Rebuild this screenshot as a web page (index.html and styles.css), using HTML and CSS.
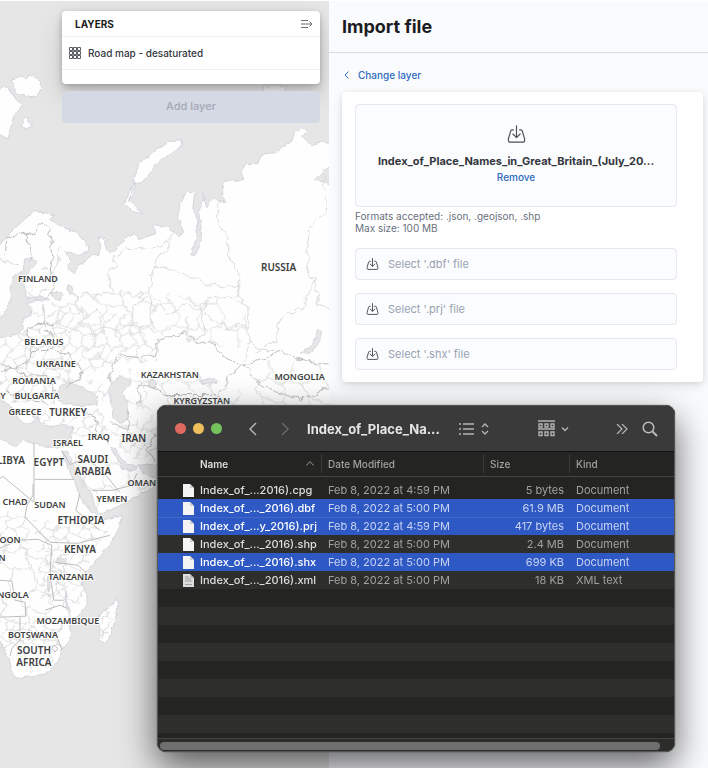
FILE: index.html
```html
<!DOCTYPE html>
<html lang="en">
<head>
<meta charset="utf-8">
<title>Maps - Import file</title>
<link rel="stylesheet" href="styles.css">
</head>
<body>
<svg class="sprite" aria-hidden="true">
  <symbol id="import" viewBox="0 0 20 20"><path d="M6.500 5.500H5.200C4.300 5.500 3.700 6 3.500 6.800L1 15.500V17.500C1 18.500 1.600 19 2.500 19H17.500C18.400 19 19 18.500 19 17.500V15.500L16.500 6.800C16.300 6 15.700 5.500 14.800 5.500H13.500M10 1V13.500M6 10L10 14L14 10"/></symbol>
  <symbol id="doc" viewBox="0 0 11 13"><path d="M0 0H7L11 4V13H0Z" fill="#f4f4f4"/><path d="M7 0V4H11Z" fill="#cfcfcf"/></symbol>
  <symbol id="docxml" viewBox="0 0 11 13"><path d="M0 0H7L11 4V13H0Z" fill="#dedede"/><path d="M7 0V4H11Z" fill="#bdbdbd"/><path d="M2 3H6M2 5H8M2 7H9M2 10.500H9" stroke="#a0a0a0" stroke-width="1"/></symbol>
</svg>
<main class="app">
  <section class="map" aria-label="Map">
    <svg class="world" viewBox="0 0 330 768" preserveAspectRatio="xMinYMin slice">
      <defs>
        <pattern id="cells" width="38" height="34" patternUnits="userSpaceOnUse">
          <path d="M0 8L7 5L13 9L20 4L27 7L31 3L38 8M7 5L5 0M20 4L22 0M5 34L8 29L0 24M8 29L16 27L22 34M16 27L14 19L7 17L0 24M7 17L7 12L13 9M14 19L22 16L27 7M22 16L28 20L26 28L16 27M28 20L38 24M26 28L31 34M31 3L31 0M38 8L33 14L28 20M31 34L31 31"/>
        </pattern>
        <pattern id="wide" width="47" height="53" patternUnits="userSpaceOnUse">
          <path d="M0 12L12 8L21 14L33 6L47 12M12 8L9 0M33 6L38 0M9 53L14 41L0 33M14 41L30 38L38 53M30 38L26 24L21 14M26 24L47 33M0 33L6 22L0 12"/>
        </pattern>
        <filter id="rough" x="0" y="0" width="330" height="768" filterUnits="userSpaceOnUse">
          <feTurbulence type="fractalNoise" baseFrequency="0.110" numOctaves="2" seed="4"/>
          <feDisplacementMap in="SourceGraphic" scale="9" xChannelSelector="R" yChannelSelector="G"/>
        </filter>
        <filter id="coast" x="0" y="0" width="330" height="768" filterUnits="userSpaceOnUse">
          <feTurbulence type="fractalNoise" baseFrequency="0.150" numOctaves="2" seed="9"/>
          <feDisplacementMap in="SourceGraphic" scale="4" xChannelSelector="R" yChannelSelector="G"/>
        </filter>
      </defs>
      <g class="land" filter="url(#coast)">
        <path d="M-9 250L0 244L7 235L22 221L33 211L45 212L54 214L50 219L62 226L77 232L87 242L88 251L80 255L65 250L70 260L68 268L75 273L78 265L88 258L92 254L99 254L101 245L98 236L106 238L106 249L113 251L120 244L128 235L135 233L140 239L155 233L153 224L168 226L180 237L184 232L178 216L180 205L187 190L195 192L193 208L198 220L197 235L191 253L196 254L202 240L201 225L199 212L204 200L203 192L207 207L213 197L220 200L226 202L223 195L223 181L233 179L243 180L242 170L246 163L258 162L264 153L275 152L285 145L291 143L295 132L303 127L307 130L303 136L312 144L322 141L340 148V500H158L157 465L147 464L138 465L128 464L121 458L115 448L110 447L117 458L122 467L128 471L136 469L139 463L142 472L155 478L154 487L140 494L125 503L105 512L98 514L95 502L90 490L80 475L72 460L67 451L62 450L66 463L73 478L80 495L88 508L97 516L99 520L110 519L122 515L120 525L110 545L95 562L85 572L82 585L87 594L87 605L80 614L71 622L70 640L62 650L58 662L45 674L30 676L17 679L12 672L8 658L2 645L-9 630V437L0 438L8 443L15 446L22 440L34 443L48 447L66 446L71 440L73 426L60 425L50 426L40 422L37 412L30 411L35 419L28 425L20 420L13 408L4 401L-9 396Z"/>
        <path d="M129 201L133 182L139 163L157 148L173 140L181 139L182 145L173 151L157 163L143 182L136 182L133 195L129 199L136 205L143 213L133 211L125 203L128 193L135 180Z"/>
        <path d="M-3 90L4 86L9 88L14 96L22 105L14 114L11 126L8 138L-3 132ZM11 80L21 75L26 78L30 74L40 80L42 86L38 94L30 96L18 94ZM23 118L28 115L28 121L33 124L27 129L22 126Z"/>
        <path d="M117 598L119 605L115 620L110 638L105 643L99 640L100 628L98 621L102 611L110 607Z"/>
        <path d="M264 85L286 85L290 100L264 100Z" fill="#f0f0f0"/>
      </g>
      <g class="water" filter="url(#coast)">
        <path d="M-5 338L15 334L23 330L23 318L31 315L32 308L27 303L36 300L49 299L42 296L27 298L24 285L29 271L37 262L34 258L25 258L23 270L15 275L10 287L12 298L6 310L-5 325Z"/>
        <path d="M56 398L60 386L70 381L77 384L88 390L98 396L97 404L80 405L66 404ZM108 390L112 381L120 376L130 379L129 386L122 392L128 402L129 418L120 423L113 416L112 402Z"/>
        <path d="M51 292L57 290L63 295L61 300L54 298ZM67 284L72 286L74 294L69 292ZM301 353L312 345L318 329L322 331L320 342L311 352ZM199 380L216 378L218 382L201 383ZM150 380L154 379L155 387L150 387ZM57 558L66 557L66 563L59 564ZM315 179L325 170L335 164L335 186L324 180Z"/>
        <path d="M66 590L68 602L70 611L67 608L65 598ZM48 575L51 588L50 592L47 582Z"/>
      </g>
      <g filter="url(#rough)">
        <path class="cells" d="M-5 345L30 325L48 312L80 305L128 315L158 330L158 360L110 365L75 380L54 385L55 402L-5 402ZM40 408L102 408L110 440L72 438L72 425L42 422ZM29 289L50 287L46 298L28 299ZM32 305L44 305L42 316L31 317ZM-5 310L5 305L-5 330ZM85 378L104 382L108 400L98 400ZM110 422L158 415V462L130 458L115 445ZM-5 510L28 515L30 555L-5 550ZM35 520L78 520L106 530L84 570L85 600L70 620L62 600L40 600ZM102 612L117 605L108 637L99 637ZM-5 620L65 620L60 645L-5 640Z"/>
        <path class="wide" d="M52 295L120 290L245 300L250 350L160 335L52 340ZM130 370L205 370L240 390L240 410L130 410ZM260 360L340 360V420L250 420ZM75 470L95 510L150 488L120 462L75 452ZM-5 545L60 545L65 665L16 674L-5 640Z"/>
        <path class="region" d="M117 257L124 248L157 248L170 240L174 226M174 238L157 260L152 275L151 290L135 295L115 293M152 265L175 270L186 275L198 276L208 284L238 288L239 295L210 297L203 310L186 302L170 314L153 297M220 200L217 220L228 236L228 253L239 272L239 290L248 308L250 330L252 343L244 360M323 170L326 190L327 210L309 228L308 272L316 277L305 304L290 314L279 320L277 340L268 345L256 352M308 270L315 280L319 305L330 307M113 257L118 266L107 272L111 285L116 292L75 296M40 268L52 270M60 247L55 270M0 258L18 265M252 343L265 350L281 350M200 310L206 325L205 335L188 339L188 316M151 295L150 325L130 325L133 307L151 293M203 312L226 327L250 325"/>
        <path class="border" d="M5 255L7 238L20 230L28 236L31 260M20 230L28 234L36 232L39 223L48 224L51 240L53 275L55 285L45 299M44 305L44 325L54 336L53 350L32 350L27 330M54 325L34 325L21 333M32 350L30 362L0 371M53 350L70 355L82 370L80 379L66 385M0 364L15 368L20 375L47 374L55 392M5 390L30 400L48 403M110 371L117 355L140 357L157 355L157 340L185 332L198 342L210 339L222 356L243 365L258 360L280 351L305 360L318 364L330 363M243 365L230 377L221 390L218 405M243 365L256 380L270 388L300 399L330 388M110 371L110 382M139 410L139 386L150 384L165 394L215 394M85 412L97 417L96 430L108 445M110 422L130 430L128 410M157 430L148 450L157 463"/>
      </g>
      <g class="frontier">
        <path d="M34 443V502L3 476L0 478M35 479H74M33 484V495L27 505L25 517L38 530L50 542L78 543L110 535M0 548L18 540L38 539L52 545L50 575L54 600L64 600M0 580L12 581L15 600L25 602L26 616L0 617M20 617V640L12 648L10 656M45 610L60 605L67 608M28 640L42 632L56 633L62 650M62 450L70 464L86 458L102 470L120 492M92 490L112 490L132 485L137 473M55 562L78 565L86 572M80 493L76 510L100 530M54 645L58 648L55 652L52 648Z"/>
      </g>
      <g class="names">
        <text x="38" y="281">FINLAND</text><text x="44" y="344">BELARUS</text><text x="56" y="366">UKRAINE</text><text x="170" y="377">KAZAKHSTAN</text><text x="300" y="379">MONGOLIA</text><text x="34" y="383">ROMANIA</text><text x="3" y="399">Y</text><text x="37" y="399">BULGARIA</text><text x="202" y="404">KYRGYZSTAN</text><text x="25" y="415">GREECE</text><text x="68" y="446">ISRAEL</text><text x="99" y="440">IRAQ</text><text x="142" y="486">OMAN</text><text x="112" y="502">YEMEN</text><text x="15" y="505">CHAD</text><text x="50" y="508">SUDAN</text><text x="10" y="543">OON</text><text x="2" y="561">N</text><text x="71" y="580">TANZANIA</text><text x="13" y="598">NGOLA</text><text x="68" y="624">MOZAMBIQUE</text><text x="33" y="638">BOTSWANA</text>
      </g>
      <g class="names major">
        <text x="279" y="270">RUSSIA</text><text x="68" y="416">TURKEY</text><text x="134" y="442">IRAN</text><text x="11" y="464">LIBYA</text><text x="49" y="466">EGYPT</text><text x="93" y="463">SAUDI</text><text x="93" y="475">ARABIA</text><text x="81" y="524">ETHIOPIA</text><text x="80" y="553">KENYA</text><text x="34" y="654">SOUTH</text><text x="34" y="666">AFRICA</text>
      </g>
    </svg>
    <div class="layer-control">
      <div class="layers">
        <header class="layers-head">
          <h2>Layers</h2>
          <button class="plain" type="button" aria-label="Collapse layers"><svg width="12" height="10" viewBox="0 0 12 10"><path d="M0 1.500H7M0 5H11M0 8.500H7M8.500 2.500L11 5L8.500 7.500" fill="none" stroke="#6b6e77"/></svg></button>
        </header>
        <div class="layer-row">
          <svg width="12" height="12" viewBox="0 0 12 12" fill="none" stroke="#5a5d65"><path d="M.5.500H3.500V3.500H.5ZM4.500.500H7.500V3.500H4.500ZM8.500.500H11.500V3.500H8.500ZM.5 4.500H3.500V7.500H.5ZM4.500 4.500H7.500V7.500H4.500ZM8.500 4.500H11.500V7.500H8.500ZM.5 8.500H3.500V11.500H.5ZM4.500 8.500H7.500V11.500H4.500ZM8.500 8.500H11.500V11.500H8.500Z"/></svg>
          <span>Road map - desaturated</span>
        </div>
      </div>
      <button class="add-layer" type="button" disabled>Add layer</button>
    </div>
  </section>

  <section class="flyout">
    <header class="flyout-head"><h1>Import file</h1></header>
    <div class="flyout-body">
      <a class="back" href="#"><svg width="5" height="8" viewBox="0 0 5 8"><path d="M4.500.500L1 4L4.500 7.500" fill="none" stroke="#2f6bc0"/></svg>Change layer</a>
      <form class="card">
        <div class="drop">
          <svg class="import big"><use href="#import"/></svg>
          <strong>Index_of_Place_Names_in_Great_Britain_(July_20...</strong>
          <button class="plain link" type="button">Remove</button>
        </div>
        <p class="help">Formats accepted: .json, .geojson, .shp<br>Max size: 100 MB</p>
        <label class="picker"><input type="file" accept=".dbf"><svg class="import"><use href="#import"/></svg>Select '.dbf' file</label>
        <label class="picker"><input type="file" accept=".prj"><svg class="import"><use href="#import"/></svg>Select '.prj' file</label>
        <label class="picker"><input type="file" accept=".shx"><svg class="import"><use href="#import"/></svg>Select '.shx' file</label>
      </form>
    </div>
  </section>
</main>

<section class="finder" aria-label="File browser">
  <header class="toolbar">
    <div class="lights"><button class="red" type="button" aria-label="Close"></button><button class="yellow" type="button" aria-label="Minimize"></button><button class="green" type="button" aria-label="Zoom"></button></div>
    <div class="history">
      <button class="plain" type="button" aria-label="Back"><svg width="8" height="14" viewBox="0 0 8 14"><path d="M7 1L1 7L7 13" stroke="#b5b5b5" stroke-width="1.500"/></svg></button>
      <button class="plain" type="button" aria-label="Forward"><svg width="8" height="14" viewBox="0 0 8 14"><path d="M1 1L7 7L1 13" stroke="#686868" stroke-width="1.500"/></svg></button>
    </div>
    <h2>Index_of_Place_Na...</h2>
    <button class="plain view" type="button" aria-label="List view"><svg width="30" height="14" viewBox="0 0 30 14"><path d="M0 2H2M0 7H2M0 12H2M4 2H15M4 7H15M4 12H15M23 5L26 2L29 5M23 9L26 12L29 9" stroke="#b5b5b5" stroke-width="1.400"/></svg></button>
    <button class="plain group" type="button" aria-label="Group items"><svg width="32" height="18" viewBox="0 0 32 18"><path d="M0 1H17M0 9H17M1 4H4V7H1ZM7 4H10V7H7ZM13 4H16V7H13ZM1 12H4V15.500H1ZM7 12H10V15.500H7ZM13 12H16V15.500H13ZM24 7.500L27 10.500L30 7.500" stroke="#b5b5b5" stroke-width="1.300"/></svg></button>
    <button class="plain more" type="button" aria-label="More"><svg width="12" height="10" viewBox="0 0 12 10"><path d="M1 0L6 5L1 10M6 0L11 5L6 10" stroke="#b5b5b5" stroke-width="1.200"/></svg></button>
    <button class="plain" type="button" aria-label="Search"><svg width="16" height="16" viewBox="0 0 16 16"><circle cx="6.500" cy="6.500" r="5.300" stroke="#bdbdbd" stroke-width="1.500"/><path d="M10.500 10.500L15 15" stroke="#bdbdbd" stroke-width="1.800"/></svg></button>
  </header>
  <table>
    <colgroup><col class="c-name"><col class="c-date"><col class="c-size"><col></colgroup>
    <thead><tr><th class="sorted" scope="col"><span>Name<svg width="8" height="5" viewBox="0 0 8 5"><path d="M.5 4.500L4 .500L7.500 4.500" stroke="#9a9a9a"/></svg></span></th><th scope="col"><span>Date Modified</span></th><th scope="col"><span>Size</span></th><th scope="col"><span>Kind</span></th></tr></thead>
    <tbody>
      <tr><td><svg><use href="#doc"/></svg>Index_of_...2016).cpg</td><td>Feb 8, 2022 at 4:59 PM</td><td>5 bytes</td><td>Document</td></tr>
      <tr class="selected"><td><svg><use href="#doc"/></svg>Index_of_..._2016).dbf</td><td>Feb 8, 2022 at 5:00 PM</td><td>61.9 MB</td><td>Document</td></tr>
      <tr class="selected"><td><svg><use href="#doc"/></svg>Index_of_...y_2016).prj</td><td>Feb 8, 2022 at 4:59 PM</td><td>417 bytes</td><td>Document</td></tr>
      <tr><td><svg><use href="#doc"/></svg>Index_of_..._2016).shp</td><td>Feb 8, 2022 at 5:00 PM</td><td>2.4 MB</td><td>Document</td></tr>
      <tr class="selected"><td><svg><use href="#doc"/></svg>Index_of_..._2016).shx</td><td>Feb 8, 2022 at 5:00 PM</td><td>699 KB</td><td>Document</td></tr>
      <tr><td><svg><use href="#docxml"/></svg>Index_of_..._2016).xml</td><td>Feb 8, 2022 at 5:00 PM</td><td>18 KB</td><td>XML text</td></tr>
    </tbody>
  </table>
  <div class="blank-rows"></div>
  <div class="scroll"><div class="thumb"></div></div>
</section>
</body>
</html>
```
FILE: styles.css
```css
* { box-sizing: border-box; }
body { margin: 0; position: relative; min-height: 100vh; overflow: hidden; font-family: Inter, "Liberation Sans", sans-serif; font-size: 10px; color: #343741; }
h1, h2, p { margin: 0; }
button { font-family: inherit; }
.sprite { position: absolute; width: 0; height: 0; }
.plain { display: flex; padding: 0; border: 0; background: none; }

.app { display: grid; grid-template-columns: minmax(0, 1fr) 379px; min-height: 100vh; border-top: 1px solid #fff; }

.map { position: relative; overflow: hidden; background: #e6e6e6; }
.world { position: absolute; top: 0; left: 0; width: 100%; height: 100%; }
.land { fill: #fefefe; stroke: #d3d6de; stroke-width: 1; }
.water { fill: #e6e6e6; stroke: #d3d6de; stroke-width: 1; }
.world pattern path { fill: none; stroke: #d9d9d9; stroke-width: 1; }
.cells { fill: url(#cells); }
.wide { fill: url(#wide); }
.region { fill: none; stroke: #dcdcdc; stroke-width: 1; }
.border, .frontier { fill: none; stroke: #bdbdbd; stroke-width: 1; }
.names { font: 600 9px "Noto Sans", sans-serif; fill: #404040; stroke: #fff; stroke-width: 2px; stroke-opacity: 0.800; paint-order: stroke; text-anchor: middle; }
.names.major { font-size: 10px; }

.layer-control { position: relative; width: 258px; margin: 10px 9px 0 auto; }
.layers { height: 73px; border-radius: 4px; background: #fff; box-shadow: 0 1px 5px rgba(0, 0, 0, 0.150), 0 6px 10px rgba(0, 0, 0, 0.150), 0 12px 30px rgba(0, 0, 0, 0.120); }
.layers-head { display: flex; align-items: center; justify-content: space-between; height: 26px; padding: 0 7px 0 13px; border-bottom: 1px solid #eef0f4; }
.layers-head h2 { font-size: 10px; font-weight: 700; text-transform: uppercase; color: #1a1c21; }
.layer-row { display: flex; align-items: center; gap: 7px; height: 33px; padding: 0 7px; border-bottom: 1px solid #eef0f4; font-size: 10px; font-weight: 500; }
.add-layer { display: block; width: 100%; height: 32px; margin-top: 7px; padding: 0 0 2px; border: 0; border-radius: 4px; background: #d5d9e4; color: #a3a8b4; font-size: 11px; font-weight: 500; }

.flyout { background: #fafbfd; }
.flyout-head { display: flex; align-items: center; height: 52px; padding: 0 13px; border-bottom: 1px solid #d6dbe6; }
.flyout-head h1 { font-size: 18px; font-weight: 700; color: #1a1c21; }
.flyout-body { padding: 14px 5px 0 13px; }
.back { display: flex; align-items: center; gap: 9px; width: max-content; height: 15px; padding-left: 2px; color: #2f6bc0; font-size: 10px; font-weight: 500; text-decoration: none; }
.card { margin-top: 10px; padding: 12px 26px 12px 13px; border-radius: 4px; background: #fff; box-shadow: 0 1px 4px rgba(0, 0, 0, 0.080), 0 4px 12px rgba(0, 0, 0, 0.100); }
.drop, .picker { border: 1px solid #e5e8f0; border-radius: 4px; background: #fbfcfd; }
.drop { display: flex; flex-direction: column; align-items: center; height: 103px; padding: 20px 18px 0; }
.drop strong { max-width: 100%; margin-top: 11px; overflow: hidden; font-size: 11px; font-weight: 700; line-height: 14px; text-overflow: ellipsis; white-space: nowrap; }
.import { width: 13px; height: 12px; flex: none; fill: none; stroke: #4b4e57; stroke-width: 1.600; stroke-linecap: round; stroke-linejoin: round; }
.import.big { width: 19px; height: 18px; stroke-width: 1.300; }
.link { color: #2f6bc0; margin-top: 3px; font-size: 10px; font-weight: 500; line-height: 12px; }
.help { margin: 3px 0 14px; color: #69707d; font-size: 10px; line-height: 12px; }
.picker { position: relative; display: flex; align-items: center; gap: 9px; height: 32px; margin-bottom: 13px; padding: 0 10px; color: #98a2b3; font-size: 11px; }
.picker:last-child { margin-bottom: 0; }
.picker input { position: absolute; inset: 0; width: 100%; opacity: 0; }

.finder { position: absolute; top: 405px; right: 33px; left: 157px; overflow: hidden; border: 1px solid #555; border-radius: 9px; background: #242422; box-shadow: 0 0 1px #000, 0 14px 36px rgba(0, 0, 0, 0.620); color: #a1a1a1; font-size: 11px; }
.finder svg { fill: none; }
.toolbar { display: flex; align-items: center; height: 46px; padding: 0 16px 0 17px; background: #3a3a3a; border-bottom: 1px solid #111; }
.lights { display: flex; gap: 7px; }
.lights button { width: 11px; height: 11px; padding: 0; border: 0; border-radius: 50%; }
.red { background: #e0695f; }
.yellow { background: #eebe5c; }
.green { background: #75c15c; }
.history { display: flex; gap: 24px; margin-left: 27px; }
.toolbar h2 { width: 136px; margin-left: 18px; font-size: 13px; font-weight: 700; color: #e5e5e5; white-space: nowrap; }
.view { margin-left: 16px; }
.group { margin-left: 49px; }
.more { margin: 0 14px 0 auto; }
table { width: 100%; border-collapse: collapse; table-layout: fixed; }
.c-name { width: 163px; }
.c-date { width: 162px; }
.c-size { width: 86px; }
th { height: 24px; padding: 2px 0; border-bottom: 1px solid #444442; font-size: 10px; font-weight: 500; text-align: left; }
th span { display: flex; align-items: center; justify-content: space-between; height: 19px; padding: 0 7px 0 6px; border-left: 1px solid #3a3a38; }
th.sorted { color: #dedede; font-weight: 600; }
th.sorted span { padding-left: 42px; border: 0; }
tbody::before { content: ""; display: block; height: 4px; }
td { height: 18px; padding: 0 0 0 7px; font-size: 11px; line-height: 18px; white-space: nowrap; }
td:first-child { padding-left: 25px; color: #dedede; font-weight: 500; }
td:nth-child(3) { padding-right: 5px; text-align: right; }
td svg { width: 11px; height: 13px; margin-right: 6px; vertical-align: -3px; }
tbody tr:nth-child(even) { background: #2e2e2c; }
tbody tr.selected { background: #2e58c4; color: #c9d4f3; }
tbody tr.selected + .selected { box-shadow: inset 0 1px #4168ca; }
tbody tr.selected td:first-child { color: #fff; }
.blank-rows { height: 149px; background: repeating-linear-gradient(#242422 0 18px, #2e2e2c 18px 36px); }
.scroll { height: 13px; padding: 3px 14px 2px 2px; border-top: 1px solid #444442; background: #2c2c2b; }
.thumb { height: 8px; border-radius: 4px; background: #6f6f6f; }
```
